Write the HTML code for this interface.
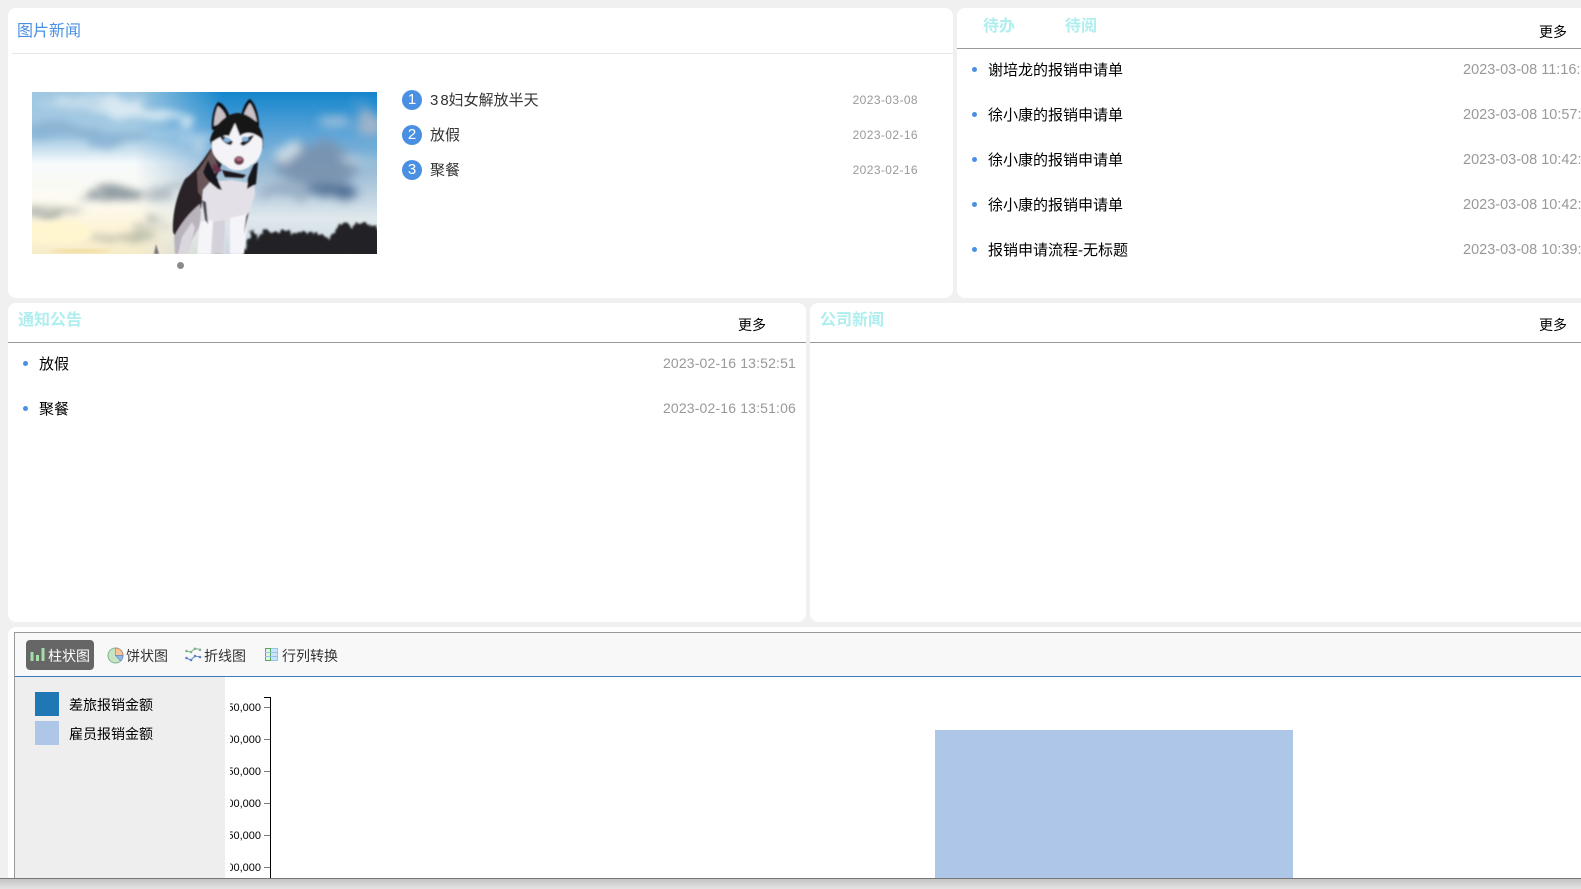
<!DOCTYPE html>
<html lang="zh-CN"><head><meta charset="utf-8"><title>首页</title>
<style>
html,body{margin:0;padding:0;width:1581px;height:889px;overflow:hidden;background:#f0f0f0;font-family:"Liberation Sans","WenQuanYi Zen Hei","Noto Sans CJK SC",sans-serif;}
#w{position:absolute;left:0;top:0;width:1581px;height:889px;overflow:hidden;background:#f0f0f0;}
.a{position:absolute;white-space:nowrap;}
.card{position:absolute;background:#fff;border-radius:8px;overflow:hidden;}
.t{position:absolute;white-space:nowrap;line-height:20px;height:20px;}
.tab{font-size:16px;font-weight:bold;color:#aeeeee;}
.more{font-size:14px;color:#000;}
.item{font-size:15px;color:#000;}
.dt{font-size:14px;color:#999;letter-spacing:.16px;}
.dl{font-size:14.500px;color:#999;}
.dot{position:absolute;width:5px;height:5px;border-radius:50%;background:#4a90e2;}
.hr{position:absolute;height:1px;background:#999;}
.num{position:absolute;width:20px;height:20px;border-radius:50%;background:#4a90e2;color:#fff;font-size:15px;line-height:20px;text-align:center;}
.nt{font-size:15px;color:#333;}
.nd{font-size:12px;color:#999;letter-spacing:.4px;}
.tool{font-size:14px;color:#333;}
.yl{position:absolute;right:0;font-size:11px;color:#000;line-height:14px;}
.tk{position:absolute;left:264px;width:6px;height:1px;background:#777;}
</style></head>
<body><div id="w">
<!-- picture news -->
<div class="card" style="left:8px;top:8px;width:945px;height:290px;">
 <div class="t" style="left:9px;top:14px;font-size:16px;color:#4a90e2;">图片新闻</div>
 <div class="a" style="left:4px;top:45px;right:0;height:1px;background:#e6e6e6;"></div>
 <svg class="a" style="left:24px;top:84px;" width="345" height="162" viewBox="0 0 345 162">
  <defs>
   <linearGradient id="sky" x1="0" y1="0" x2="0" y2="1">
    <stop offset="0" stop-color="#a0c8e2"/><stop offset=".28" stop-color="#a4cae3"/><stop offset=".44" stop-color="#f6fafb"/><stop offset=".68" stop-color="#fdfaf0"/><stop offset=".85" stop-color="#fdf3d8"/><stop offset="1" stop-color="#f7ecc9"/>
   </linearGradient>
   <linearGradient id="skyr" x1="0" y1="0" x2="0" y2="1">
    <stop offset="0" stop-color="#1486cc"/><stop offset=".25" stop-color="#5aa3d8"/><stop offset=".5" stop-color="#9dbdd6"/><stop offset=".78" stop-color="#dfe8ec"/><stop offset="1" stop-color="#cbd8e2"/>
   </linearGradient>
   <linearGradient id="fade" x1="0" y1="0" x2="1" y2="0">
    <stop offset=".3" stop-color="#fff" stop-opacity="0"/><stop offset=".55" stop-color="#fff" stop-opacity="1"/>
   </linearGradient>
   <mask id="m"><rect width="345" height="162" fill="url(#fade)"/></mask>
   <filter id="wisp" x="-40%" y="-100%" width="180%" height="300%"><feTurbulence type="fractalNoise" baseFrequency=".018 .07" numOctaves="3" seed="4" result="n"/><feDisplacementMap in="SourceGraphic" in2="n" scale="30" xChannelSelector="R" yChannelSelector="G"/><feGaussianBlur stdDeviation="4"/></filter>
   <filter id="puff" x="-40%" y="-80%" width="180%" height="260%"><feTurbulence type="fractalNoise" baseFrequency=".035" numOctaves="3" seed="9" result="n"/><feDisplacementMap in="SourceGraphic" in2="n" scale="24" xChannelSelector="R" yChannelSelector="G"/><feGaussianBlur stdDeviation="5"/></filter>
   <filter id="twig" x="-5%" y="-30%" width="110%" height="140%"><feTurbulence type="fractalNoise" baseFrequency=".22 .12" numOctaves="2" seed="3" result="n"/><feDisplacementMap in="SourceGraphic" in2="n" scale="9" xChannelSelector="R" yChannelSelector="G"/><feGaussianBlur stdDeviation="1"/></filter>
   <filter id="b1" x="-10%" y="-10%" width="120%" height="120%"><feGaussianBlur stdDeviation=".9"/></filter>
   <filter id="b2" x="-30%" y="-30%" width="160%" height="160%"><feGaussianBlur stdDeviation="3"/></filter>
  </defs>
  <rect width="345" height="162" fill="url(#sky)"/>
  <rect width="345" height="162" fill="url(#skyr)" mask="url(#m)"/>
  <g filter="url(#wisp)" opacity=".8">
   <ellipse cx="95" cy="18" rx="70" ry="6" fill="#e6f1f7" transform="rotate(10 95 18)"/>
   <ellipse cx="60" cy="42" rx="65" ry="7" fill="#86b0d1"/>
   <ellipse cx="40" cy="12" rx="35" ry="4" fill="#c6dcea"/>
   <ellipse cx="150" cy="46" rx="32" ry="6" fill="#a9cee7"/>
   <ellipse cx="85" cy="102" rx="32" ry="4" fill="#78868f"/>
   <ellipse cx="135" cy="97" rx="22" ry="4" fill="#aab5bb"/>
   <ellipse cx="22" cy="120" rx="28" ry="3.500" fill="#98a19b"/>
   <ellipse cx="90" cy="145" rx="32" ry="6" fill="#b0b7a3"/>
   <ellipse cx="125" cy="133" rx="24" ry="3" fill="#98a09b"/>
  </g>
  <ellipse cx="25" cy="140" rx="34" ry="12" fill="#fff6d0" filter="url(#b2)"/>
  <ellipse cx="48" cy="159" rx="30" ry="1.500" fill="#eccf7c" filter="url(#b2)"/>
  <g filter="url(#puff)" opacity=".9">
   <ellipse cx="285" cy="74" rx="42" ry="20" fill="#7891ae"/>
   <ellipse cx="298" cy="100" rx="26" ry="7" fill="#3f618a"/>
   <ellipse cx="248" cy="100" rx="24" ry="6" fill="#8ea4bb"/>
   <ellipse cx="336" cy="34" rx="13" ry="12" fill="#a7b6c8"/>
   <ellipse cx="300" cy="30" rx="17" ry="5" fill="#aac4da"/>
   <ellipse cx="326" cy="12" rx="9" ry="3" fill="#85b4d8"/>
   <ellipse cx="254" cy="60" rx="12" ry="7" fill="#d6e0e6"/>
   <ellipse cx="325" cy="66" rx="18" ry="3" fill="#d3e0e9"/>
   <ellipse cx="166" cy="54" rx="8" ry="6" fill="#dfe9ee"/>
  </g>
  <path filter="url(#twig)" fill="#212126" d="M212 166 L214 150 L220 138 L226 146 L234 138 L242 141 L252 137 L260 142 L270 139 L280 141 L290 143 L298 147 L304 136 L312 130 L320 135 L328 129 L336 133 L345 134 L350 166 Z"/>
  <path fill="#77747a" filter="url(#b1)" d="M122 162 L124 152 L127 162 Z M182 162 L186 154 L190 162 Z"/>
  <g filter="url(#b1)">
   <path fill="#2a2428" d="M180 55 C172 66 165 78 153 87 C146 100 140 120 141 140 L146 150 L172 112 L182 90 L190 72 Z"/>
   <path fill="#6a5659" d="M180 57 C175 66 170 74 165 80 L166 100 L172 108 L178 92 L186 76 Z"/>
   <path fill="#b9b3bd" d="M142 145 C148 132 158 120 168 112 L170 130 L160 148 L156 162 L143 162 Z"/>
   <path fill="#dad7de" d="M146 162 L150 145 L160 130 L163 136 L156 162 Z"/>
   <path fill="#e3e1e7" d="M171 98 L178 90 L200 88 L222 92 L223 102 C220 112 217 120 214 128 L208 162 L198 162 L196 128 L193 128 L193 162 L166 162 L168 132 Z"/>
   <path fill="#f5f4f8" d="M168 130 L181 128 L180 162 L165 162 Z M198 126 L216 122 L212 162 L198 162 Z"/>
   <path fill="#d5d1da" d="M181 130 L193 128 L192 162 L179 162 Z"/>
   <path fill="#4d4854" d="M170 108 L173 128 L176 132 L174 110 Z"/>
   <path fill="#565a66" d="M214 124 L217 120 L212 142 Z"/>
   <path fill="#17151a" d="M176 68 C181 78 186 88 190 98 L186 97 C180 92 174 88 171 80 Z M222 72 L226 70 L224 92 L215 97 L216 86 Z"/>
   <path fill="#1a181d" d="M190 78 L214 83 L211 86 L193 85 Z"/>
   <path fill="#6a2e4b" d="M181 71 L190 78 L186 81 L181 78 Z"/>
   <path fill="#101014" d="M180 38 C179 26 182 14 186 10 C191 11 196 18 198 26 L192 36 Z"/>
   <path fill="#101014" d="M209 24 C211 15 215 8 218 7 C224 12 227 24 227 34 L216 32 Z"/>
   <path fill="#c9c1c6" d="M182 34 C182 25 184 18 186 14 C190 17 193 21 194 25 L187 32 Z"/>
   <path fill="#c9c1c6" d="M212 22 C214 17 216 13 218 11 C222 17 224 24 225 30 L218 25 Z"/>
   <path fill="#121216" d="M178 48 C181 35 193 22 205 21 C217 21 229 32 231 46 L231 56 L180 56 Z"/>
   <path fill="#f4f4f8" d="M180 50 C185 47 192 42 197 44 L203 31 L208 44 C214 39 222 40 230 47 C232 58 227 70 219 73 C213 80 199 80 194 74 C186 70 178 62 180 50 Z"/>
   <path fill="#1e2028" d="M187 43 C192 44 198 47 201 50 L199 53 C194 53 190 49 187 43 Z M208 52 C211 47 217 44 222 43 C220 48 216 52 211 54 Z"/>
   <ellipse cx="195" cy="48" rx="3.500" ry="2.500" fill="#86b4dc"/>
   <ellipse cx="213" cy="47" rx="3.500" ry="2.500" fill="#86b4dc"/>
   <ellipse cx="207" cy="68.500" rx="5" ry="4.500" fill="#6b3a48"/>
   <ellipse cx="207" cy="67" rx="3.500" ry="2" fill="#a86a7a"/>
  </g>
 </svg>
 <div class="a" style="left:168.500px;top:254px;width:7px;height:7px;border-radius:50%;background:#8b8b8b;"></div>
 <div class="num" style="left:394px;top:82px;">1</div><div class="t nt" style="left:422px;top:83px;"><span style="letter-spacing:2px;">3</span>8妇女解放半天</div><div class="t nd" style="right:35px;top:82px;">2023-03-08</div>
 <div class="num" style="left:394px;top:117px;">2</div><div class="t nt" style="left:422px;top:118px;">放假</div><div class="t nd" style="right:35px;top:117px;">2023-02-16</div>
 <div class="num" style="left:394px;top:152px;">3</div><div class="t nt" style="left:422px;top:153px;">聚餐</div><div class="t nd" style="right:35px;top:152px;">2023-02-16</div>
</div>
<!-- todo -->
<div class="card" style="left:957px;top:8px;width:640px;height:290px;">
 <div class="t tab" style="left:26px;top:9px;">待办</div><div class="t tab" style="left:108px;top:9px;">待阅</div>
 <div class="t more" style="left:582px;top:14px;">更多</div>
 <div class="hr" style="left:0;right:0;top:40px;"></div>
 <div class="dot" style="left:15px;top:59px;"></div><div class="t item" style="left:31px;top:53px;">谢培龙的报销申请单</div><div class="t dl" style="left:506px;top:52px;">2023-03-08 11:16:08</div>
 <div class="dot" style="left:15px;top:104px;"></div><div class="t item" style="left:31px;top:98px;">徐小康的报销申请单</div><div class="t dl" style="left:506px;top:97px;">2023-03-08 10:57:21</div>
 <div class="dot" style="left:15px;top:149px;"></div><div class="t item" style="left:31px;top:143px;">徐小康的报销申请单</div><div class="t dl" style="left:506px;top:142px;">2023-03-08 10:42:37</div>
 <div class="dot" style="left:15px;top:194px;"></div><div class="t item" style="left:31px;top:188px;">徐小康的报销申请单</div><div class="t dl" style="left:506px;top:187px;">2023-03-08 10:42:06</div>
 <div class="dot" style="left:15px;top:239px;"></div><div class="t item" style="left:31px;top:233px;">报销申请流程-无标题</div><div class="t dl" style="left:506px;top:232px;">2023-03-08 10:39:15</div>
</div>
<!-- notices -->
<div class="card" style="left:8px;top:303px;width:798px;height:319px;">
 <div class="t tab" style="left:10px;top:8px;">通知公告</div>
 <div class="t more" style="left:730px;top:12px;">更多</div>
 <div class="hr" style="left:0;right:0;top:39px;"></div>
 <div class="dot" style="left:15px;top:58px;"></div><div class="t item" style="left:31px;top:52px;">放假</div><div class="t dt" style="right:10px;top:50px;">2023-02-16 13:52:51</div>
 <div class="dot" style="left:15px;top:103px;"></div><div class="t item" style="left:31px;top:97px;">聚餐</div><div class="t dt" style="right:10px;top:95px;">2023-02-16 13:51:06</div>
</div>
<!-- company news -->
<div class="card" style="left:810px;top:303px;width:790px;height:319px;">
 <div class="t tab" style="left:10px;top:8px;">公司新闻</div>
 <div class="t more" style="left:729px;top:12px;">更多</div>
 <div class="hr" style="left:0;right:0;top:39px;"></div>
</div>
<!-- chart -->
<div class="card" style="left:8px;top:627px;width:1600px;height:280px;"></div>
<div class="a" style="left:14px;top:632px;width:1580px;height:246px;border:1px solid #999;background:#fff;box-sizing:content-box;"></div>
<div class="a" style="left:15px;top:633px;width:1570px;height:43px;background:#f8f8f8;border-bottom:1px solid #3a7abf;"></div>
<div class="a" style="left:26px;top:640px;width:68px;height:30px;background:#666;border-radius:4px;"></div>
<svg class="a" style="left:30px;top:647px;" width="15" height="15" viewBox="0 0 15 15"><rect x="0.500" y="5" width="3" height="9" fill="#a5dca8"/><rect x="6" y="8" width="3" height="6" fill="#a5dca8"/><rect x="11.500" y="1" width="3" height="13" fill="#a5dca8"/></svg>
<div class="t tool" style="left:48px;top:646px;color:#fff;">柱状图</div>
<svg class="a" style="left:107px;top:647px;" width="17" height="17" viewBox="0 0 17 17"><circle cx="8.500" cy="8.500" r="7.500" fill="#c5e5c5" stroke="#7fb58a"/><path d="M8.500 8.500V1A7.500 7.500 0 0 1 16 8.500Z" fill="#fbc49a" stroke="#b5835c" stroke-width=".7"/><path d="M8.500 8.500H16A7.500 7.500 0 0 1 13.500 14Z" fill="#8fb8ee" stroke="#6a8fc0" stroke-width=".7"/></svg>
<div class="t tool" style="left:126px;top:646px;">饼状图</div>
<svg class="a" style="left:185px;top:647px;" width="17" height="15" viewBox="0 0 17 15"><path d="M1 4L6 5L10 1.500L15.500 2.500" fill="none" stroke="#7db48d"/><path d="M1 11L6 13L10 9L15.500 10" fill="none" stroke="#5b86c6"/><g fill="#7db48d"><circle cx="1.500" cy="4" r="1.300"/><circle cx="6" cy="5" r="1.300"/><circle cx="10" cy="1.800" r="1.300"/><circle cx="15" cy="2.800" r="1.300"/></g><g fill="#5b86c6"><circle cx="1.500" cy="11" r="1.300"/><circle cx="6" cy="13" r="1.300"/><circle cx="10" cy="9" r="1.300"/><circle cx="15" cy="10" r="1.300"/></g></svg>
<div class="t tool" style="left:204px;top:646px;">折线图</div>
<svg class="a" style="left:265px;top:648px;" width="13" height="13" viewBox="0 0 13 13"><rect x=".5" y=".5" width="12" height="12" fill="#c9e4fb" stroke="#8cc4f2"/><rect x=".5" y=".5" width="5" height="12" fill="#e4f2e4" stroke="#5aa85f"/><path d="M0 4.500H13M0 8.500H13" stroke="#8cc4f2"/></svg>
<div class="t tool" style="left:282px;top:646px;">行列转换</div>
<!-- legend -->
<div class="a" style="left:15px;top:677px;width:210px;height:201px;background:#eee;"></div>
<div class="a" style="left:35px;top:692px;width:24px;height:24px;background:#1f77b4;"></div>
<div class="t" style="left:69px;top:695px;font-size:14px;color:#000;">差旅报销金额</div>
<div class="a" style="left:35px;top:721px;width:24px;height:24px;background:#aec7e8;"></div>
<div class="t" style="left:69px;top:724px;font-size:14px;color:#000;">雇员报销金额</div>
<!-- axis -->
<div class="a" style="left:230px;top:690px;width:31px;height:188px;overflow:hidden;">
 <div class="yl" style="top:11px;">150,000</div><div class="yl" style="top:43px;">100,000</div><div class="yl" style="top:75px;">050,000</div><div class="yl" style="top:107px;">000,000</div><div class="yl" style="top:139px;">950,000</div><div class="yl" style="top:171px;">900,000</div>
</div>
<div class="a" style="left:270px;top:697px;width:1px;height:181px;background:#000;"></div>
<div class="a" style="left:264px;top:697px;width:6px;height:1px;background:#000;"></div>
<div class="tk" style="top:707px;"></div><div class="tk" style="top:739px;"></div><div class="tk" style="top:771px;"></div><div class="tk" style="top:803px;"></div><div class="tk" style="top:835px;"></div><div class="tk" style="top:867px;"></div>
<div class="a" style="left:935px;top:730px;width:358px;height:148px;background:#aec7e8;"></div>
<!-- bottom bar -->
<div class="a" style="left:0;top:878px;width:1581px;height:11px;background:linear-gradient(#c4c4c4,#e4e4e4);border-top:1px solid #777;box-sizing:border-box;"></div>
</div></body></html>
